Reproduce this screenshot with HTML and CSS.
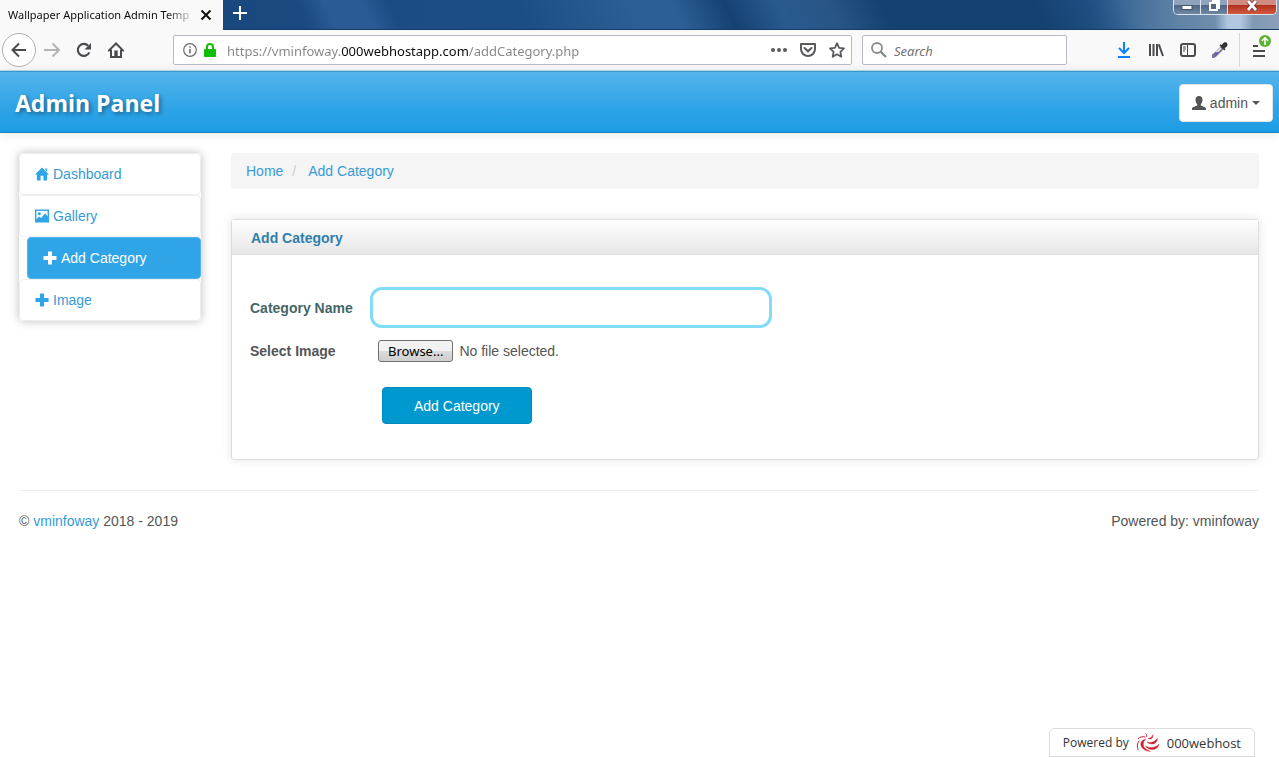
FILE: index.html
```
<!DOCTYPE html>
<html lang="en">
<head>
  <meta charset="UTF-8">
  <meta name="viewport" content="width=device-width, initial-scale=1.0">
  <title>Wallpaper Application Admin Template</title>
  <link rel="stylesheet" href="styles.css">
</head>
<body>

  <div class="browser">
    <div class="titlebar">
      <div class="tab">
        <span class="tab-title">Wallpaper Application Admin Temp</span>
        <button class="tab-close" aria-label="Close tab">
          <svg width="12" height="12" viewBox="0 0 12 12"><path d="M1.5 1.5l9 9M10.5 1.5l-9 9" stroke="#111" stroke-width="2" fill="none"/></svg>
        </button>
      </div>
      <button class="tab-new" aria-label="New tab">
        <svg width="14" height="14" viewBox="0 0 14 14"><path d="M7 0v14M0 7h14" stroke="#fff" stroke-width="2" fill="none"/></svg>
      </button>
      <div class="window-buttons">
        <button class="win-min" aria-label="Minimize">
          <svg width="12" height="12" viewBox="0 0 12 12"><rect x="1" y="5.5" width="10" height="4" fill="#fff" stroke="#4a5569"/></svg>
        </button>
        <button class="win-max" aria-label="Restore">
          <svg width="12" height="12" viewBox="0 0 12 12"><path d="M4 1h7v7h-2" fill="none" stroke="#fff" stroke-width="2"/><rect x="2" y="3" width="7" height="7" fill="#566780" stroke="#fff" stroke-width="2"/></svg>
        </button>
        <button class="win-close" aria-label="Close">
          <svg width="12" height="12" viewBox="0 0 12 12"><path d="M2 1l8 9M10 1l-8 9" stroke="#5b3a40" stroke-width="4.4"/><path d="M2 1l8 9M10 1l-8 9" stroke="#fff" stroke-width="2.8"/></svg>
        </button>
      </div>
    </div>

    <div class="toolbar">
      <button class="nav-back" aria-label="Back">
        <svg width="16" height="16" viewBox="0 0 16 16"><path d="M15 8H2M8 1.5L1.5 8L8 14.5" fill="none" stroke="#4a4a4f" stroke-width="2"/></svg>
      </button>
      <button class="nav-icon" aria-label="Forward">
        <svg width="16" height="16" viewBox="0 0 16 16"><path d="M0 8h14M8.500 1.500L15 8l-6.500 6.500" fill="none" stroke="#b4b4b7" stroke-width="2"/></svg>
      </button>
      <button class="nav-icon" aria-label="Reload">
        <svg width="16" height="16" viewBox="0 0 16 16"><path d="M13.300 10.400A6 6 0 1 1 12.200 3.800" fill="none" stroke="#4a4a4f" stroke-width="2.200"/><path d="M15 1v6.500H8.500z" fill="#4a4a4f"/></svg>
      </button>
      <button class="nav-icon" aria-label="Home">
        <svg width="16" height="16" viewBox="0 0 16 16"><path d="M.8 8.600L8 1.500l7.200 7.100" fill="none" stroke="#4a4a4f" stroke-width="2" stroke-linecap="round"/><path d="M3 7.500V15h10V7.500" fill="none" stroke="#4a4a4f" stroke-width="2"/><path d="M6.300 8.500h3.400V15H6.300z" fill="#4a4a4f"/></svg>
      </button>

      <div class="urlbar">
        <svg width="14" height="14" viewBox="0 0 14 14"><circle cx="7" cy="7" r="6.300" fill="none" stroke="#6a6a6e" stroke-width="1.200"/><path d="M7 6v4.500M7 3.300v1.500" stroke="#6a6a6e" stroke-width="1.500"/></svg>
        <svg width="12" height="14" viewBox="0 0 12 14"><path d="M3 6.500V4a3 3 0 0 1 6 0v2.500" fill="none" stroke="#12bc00" stroke-width="2"/><rect y="6" width="12" height="8" rx="1" fill="#12bc00"/></svg>
        <input class="url" type="text" aria-label="Address" value="https://vminfoway.000webhostapp.com/addCategory.php">
        <button class="nav-icon" aria-label="Page actions">
          <svg width="16" height="16" viewBox="0 0 16 16"><g fill="#5a5a5e"><circle cx="2" cy="8" r="2"/><circle cx="8" cy="8" r="2"/><circle cx="14" cy="8" r="2"/></g></svg>
        </button>
        <button class="nav-icon" aria-label="Save to Pocket">
          <svg width="16" height="16" viewBox="0 0 16 16"><path d="M1 2h14v5a7 7 0 0 1-14 0z" fill="none" stroke="#5a5a5e" stroke-width="2" stroke-linejoin="round"/><path d="M4.500 6L8 9.300L11.500 6" fill="none" stroke="#5a5a5e" stroke-width="2" stroke-linecap="round"/></svg>
        </button>
        <button class="nav-icon" aria-label="Bookmark">
          <svg width="16" height="16" viewBox="0 0 16 16"><path d="M8 1.200l2.100 4.600 4.900.6-3.600 3.400.9 4.900L8 12.300l-4.300 2.400.9-4.900L1 6.400l4.900-.6z" fill="none" stroke="#5a5a5e" stroke-width="1.800" stroke-linejoin="round"/></svg>
        </button>
      </div>

      <div class="searchbar">
        <svg width="16" height="16" viewBox="0 0 16 16"><circle cx="6" cy="6" r="5" fill="none" stroke="#8a8a8d" stroke-width="1.800"/><path d="M9.500 9.500L15 15" stroke="#8a8a8d" stroke-width="2.400"/></svg>
        <input class="search" type="text" aria-label="Search" placeholder="Search">
      </div>

      <div class="tools">
        <button class="nav-icon" aria-label="Downloads">
          <svg width="16" height="16" viewBox="0 0 16 16"><path d="M8 0v11M3 6l5 5 5-5M2 15h12" fill="none" stroke="#0a84ff" stroke-width="2"/></svg>
        </button>
        <button class="nav-icon" aria-label="Library">
          <svg width="16" height="16" viewBox="0 0 16 16"><path d="M2 2v12M5.500 2v12M9 2v12M10.800 2.300L15 14" fill="none" stroke="#4a4a4f" stroke-width="2"/></svg>
        </button>
        <button class="nav-icon" aria-label="Sidebars">
          <svg width="16" height="16" viewBox="0 0 16 16"><rect x="1" y="2" width="14" height="12" rx="2" fill="none" stroke="#4a4a4f" stroke-width="2"/><path d="M7.500 2v12" stroke="#4a4a4f"/><path d="M3 5h3M3 7h3M3 9h2" stroke="#4a4a4f"/></svg>
        </button>
        <button class="nav-icon" aria-label="Eyedropper">
          <svg width="16" height="16" viewBox="0 0 16 16"><path d="M9.500 6.500L3 13l-1.500 1" fill="none" stroke="#77748f" stroke-width="4" stroke-linecap="round"/><path d="M9 6L4.500 10.500" stroke="#dedee8" stroke-width="2"/><path d="M6 10.500L3 13.300" stroke="#655fc6" stroke-width="2"/><path d="M7.500 3.500l5 5 1-1.500-1-1c2-.8 3.500-2.200 2.800-4.200C14.500-.2 12-.2 10.500 2L9.500 3l-1-.7z" fill="#333"/></svg>
        </button>
        <span class="tools-line"></span>
        <button class="menu" aria-label="Menu, update available">
          <svg width="24" height="32" viewBox="0 0 24 32"><path d="M6 12h5M6 17h12M6 22h12" stroke="#4a4a4f" stroke-width="2"/><circle cx="18" cy="7" r="6" fill="#5bb431"/><path d="M18 11V4.500M14.800 7L18 3.800 21.200 7" fill="none" stroke="#fff" stroke-width="1.600"/></svg>
        </button>
      </div>
    </div>
  </div>

  <header class="navbar">
    <a class="brand" href="#">Admin Panel</a>
    <button class="user-btn">
      <svg width="14" height="14" viewBox="0 0 14 14"><path d="M7 0C9.300 0 10.600 1.500 10.500 4c-.1 2-.8 3.300-1.700 4.200v1.300c1.500.8 5 1.400 5.200 3V14H0v-1.500c.2-1.600 3.700-2.200 5.200-3V8.200C4.300 7.300 3.600 6 3.500 4 3.400 1.500 4.700 0 7 0z" fill="#555"/></svg>
      admin
      <span class="caret"></span>
    </button>
  </header>

  <div class="container">
    <div class="row">
      <nav class="sidebar">
        <a href="#">
          <svg width="14" height="14" viewBox="0 0 15 14"><path d="M7.500 0L15 7.500h-2V14H9V9H6v5H2V7.500H0zM11 1h2v3.500l-2-2z" fill="#2fa4e7"/></svg>
          Dashboard
        </a>
        <a href="#">
          <svg width="14" height="14" viewBox="0 0 14 14"><rect x=".7" y="1.200" width="12.600" height="11.600" fill="none" stroke="#2fa4e7" stroke-width="1.400"/><circle cx="4.300" cy="4.800" r="1.500" fill="#2fa4e7"/><path d="M1 10.500l3-3 2 1.500 4-4.500 3 3V13H1z" fill="#2fa4e7"/></svg>
          Gallery
        </a>
        <a class="active" href="#">
          <svg width="14" height="14" viewBox="0 0 14 14"><path d="M5 .5h4V5h4.500v4H9v4.500H5V9H.5V5H5z" fill="#fff"/></svg>
          Add Category
        </a>
        <a href="#">
          <svg width="14" height="14" viewBox="0 0 14 14"><path d="M5 .5h4V5h4.500v4H9v4.500H5V9H.5V5H5z" fill="#2fa4e7"/></svg>
          Image
        </a>
      </nav>

      <main class="content">
        <ul class="breadcrumb">
          <li><a href="#">Home</a></li>
          <li><a href="#">Add Category</a></li>
        </ul>

        <section class="box">
          <div class="box-header">
            <h2>Add Category</h2>
          </div>
          <form class="box-content">
            <div class="form-row">
              <label class="name-label" for="category">Category Name</label>
              <input class="category" type="text" id="category">
            </div>
            <div class="form-row">
              <span class="row-label" id="image-label">Select Image</span>
              <label class="file">
                <input type="file" aria-labelledby="image-label">
                <span class="file-btn">Browse...</span>
                No file selected.
              </label>
            </div>
            <button class="submit" type="button">Add Category</button>
          </form>
        </section>
      </main>
    </div>

    <footer class="footer">
      <p>© <a href="#">vminfoway</a> 2018 - 2019</p>
      <p>Powered by: vminfoway</p>
    </footer>
  </div>

  <a class="host-badge" href="#">
    Powered by
    <svg width="24" height="20" viewBox="0 0 24 20">
      <g fill="#d0202e" stroke="#d0202e" stroke-width=".4">
        <path d="M10 6C5 7 3.500 11 6 14.500c1.800 2.500 5 4 8.500 3.800C10 17 7.500 14.500 7.300 11.500 7.200 9 8.300 7.200 10 6z"/>
        <path d="M9.500 13c3.500 2.500 9.500 2 13.500-1.800-.8 3.300-3.500 5.300-7 5.300-3 0-5.500-1.500-6.500-3.500z"/>
        <path d="M11 9c3.500 1.200 7.500.2 10.500-3.500-.2 3.500-2.500 5.500-5.500 5.500-2.200 0-4-.8-5-2z"/>
        <path d="M12 5.500c2.200 0 4-1.200 4.800-3.800.8 2.800-1.800 5.600-4.800 3.800z"/>
      </g>
      <g fill="none" stroke="#d0202e" stroke-linecap="round">
        <path d="M3 8C1 10.500.8 13.500 2 16.500"/>
        <path d="M9 4C6.500 3.200 4 3.800 2 5.800M10.800 3.500C11 2.200 10.600 1.400 9.800.8"/>
      </g>
    </svg>
    <span class="host-name">000webhost</span>
  </a>

</body>
</html>
```
FILE: styles.css
```
* {
  box-sizing: border-box;
  margin: 0;
  padding: 0;
}

body {
  min-height: 100vh;
  background-color: #fff;
  color: #555;
  font-family: "Liberation Sans", Arial, sans-serif;
  font-size: 14px;
  line-height: 20px;
}

a {
  color: #369bd7;
  text-decoration: none;
}

button {
  border: none;
  background: none;
  font: inherit;
  cursor: pointer;
}

svg {
  display: block;
  flex-shrink: 0;
}

/* browser window */
.browser {
  font-family: "Noto Sans", sans-serif;
}

.titlebar {
  display: flex;
  height: 30px;
  background:
    linear-gradient(90deg, transparent 95%, rgba(190, 211, 235, 0.8) 96%, rgba(190, 211, 235, 0.8) 97%, transparent 98%),
    linear-gradient(65deg, transparent 24%, #2b5b94 26%, #2b5b94 29%, transparent 31%, transparent 41%, #2b5f96 50%, #2b5f96 53%, #164174 57%, #285a90 61%, #285585 65%, #154171 69%, #154171 81%, transparent 88%),
    linear-gradient(90deg, #174379, #1c4e86 40%, #24588e 85%, #5f82a6 92%, #8ba0b8);
  border-bottom: 1px solid #173a66;
}

.tab {
  display: flex;
  align-items: center;
  gap: 4px;
  width: 223px;
  height: 30px;
  padding: 0 11px 0 8px;
  background-color: #f9f9fa;
}

.tab-title {
  flex: 1;
  white-space: nowrap;
  font-size: 11px;
  color: #0c0c0d;
  mask-image: linear-gradient(90deg, #000 84%, transparent);
}

.tab-new {
  align-self: flex-start;
  padding: 6px 10px;
}

.window-buttons {
  display: flex;
  align-self: flex-start;
  height: 15px;
  margin-left: auto;
  margin-right: 2px;
  border: 1px solid #dbe4ef;
  border-top: none;
  border-radius: 0 0 5px 5px;
  overflow: hidden;
}

.window-buttons button {
  display: flex;
  justify-content: center;
  width: 27px;
  border-right: 1px solid #dbe4ef;
  background: linear-gradient(#8fa3bd 35%, #4c6485 36%, #7188a5);
}

.window-buttons .win-close {
  width: 48px;
  border: none;
  background: linear-gradient(#d08c80 35%, #b32d1c 36%, #d15a40);
}

.toolbar {
  display: flex;
  align-items: center;
  height: 41px;
  padding: 0 8px 0 2px;
  background-color: #f9f9fa;
  border-bottom: 1px solid #b5e3f5;
}

.nav-icon {
  padding: 8px;
}

.nav-back {
  padding: 8px;
  border: 1px solid #b1b1b3;
  border-radius: 50%;
  background-color: #fff;
}

.urlbar,
.searchbar {
  display: flex;
  align-items: center;
  height: 30px;
  border: 1px solid #b9bac3;
  border-radius: 2px;
  background-color: #fff;
}

.urlbar {
  flex: 1;
  gap: 7px;
  margin-left: 41px;
  padding-left: 9px;
}

.urlbar .nav-icon {
  padding: 6px 6px 6px 0;
}

.url,
.search {
  flex: 1;
  min-width: 0;
  padding-top: 2px;
  border: none;
  outline: none;
  background: none;
  font-family: "Noto Sans", sans-serif;
  font-size: 13px;
}

/* host part of the address is darker than the rest */
.url {
  margin-left: 4px;
  background: linear-gradient(90deg, #858588 114px, #0c0c0d 114px, #0c0c0d 241px, #858588 241px);
  -webkit-background-clip: text;
  background-clip: text;
  -webkit-text-fill-color: transparent;
}

.searchbar {
  gap: 7px;
  width: 205px;
  margin-left: 10px;
  padding-left: 8px;
}

.search::placeholder {
  color: #737373;
  font-style: italic;
}

.tools {
  display: flex;
  align-items: center;
  margin-left: 41px;
}

.tools-line {
  width: 1px;
  height: 34px;
  margin: 0 7px 0 3px;
  background-color: #d7d7db;
}

/* page */
.navbar {
  display: flex;
  align-items: center;
  justify-content: space-between;
  height: 62px;
  padding: 2px 6px 0 15px;
  background: linear-gradient(#54b4eb, #2fa4e7 60%, #1d9ce5);
  border-top: 1px solid #3f95cb;
  border-bottom: 1px solid #1b82c2;
  box-shadow: 0 1px 10px rgba(0, 0, 0, 0.1);
}

.brand {
  color: #fff;
  font-family: "Open Sans", sans-serif;
  font-size: 23px;
  font-weight: bold;
  text-shadow: 2px 2px 4px rgba(0, 0, 0, 0.4);
}

.user-btn {
  display: flex;
  align-items: center;
  gap: 4px;
  padding: 8px 12px;
  border: 1px solid #e3e3e3;
  border-radius: 4px;
  background-color: #fff;
  color: #555;
}

.caret {
  border-top: 4px solid #555;
  border-left: 4px solid transparent;
  border-right: 4px solid transparent;
}

.container {
  padding: 20px 20px 0 19px;
}

.row {
  display: flex;
  align-items: flex-start;
  gap: 30px;
}

.sidebar {
  display: flex;
  flex-direction: column;
  width: 182px;
  border-radius: 4px;
  box-shadow: 0 0 10px #bdbdbd;
  background-color: #fff;
}

.sidebar a {
  display: flex;
  align-items: center;
  gap: 4px;
  height: 42px;
  padding: 0 15px;
  border: 1px solid #eee;
  border-radius: 4px;
}

.sidebar .active {
  margin-left: 8px;
  border-color: #54b4eb;
  background-color: #2fa4e7;
  color: #fff;
}

.content {
  flex: 1;
}

.breadcrumb {
  display: flex;
  padding: 8px 15px;
  border-radius: 4px;
  background-color: #f5f5f5;
  list-style: none;
}

.breadcrumb li + li::before {
  content: "/";
  padding: 0 12px 0 9px;
  color: #ccc;
}

.box {
  margin-top: 30px;
  border: 1px solid #dedede;
  border-radius: 3px;
  box-shadow: 0 0 10px rgba(189, 189, 189, 0.4);
}

.box-header {
  padding: 8px 19px 6px;
  border-bottom: 1px solid #dedede;
  background: linear-gradient(#fff, #e6e6e6);
}

.box-header h2 {
  color: #317eac;
  font-size: 14px;
  line-height: 20px;
}

.box-content {
  padding: 32px 18px 35px;
}

.form-row {
  display: flex;
  align-items: center;
}

.form-row + .form-row {
  margin-top: 12px;
}

.name-label,
.row-label {
  width: 120px;
  font-weight: bold;
}

.name-label {
  color: #466;
}

.row-label {
  width: 128px;
}

.category {
  width: 402px;
  height: 41px;
  padding: 0 12px;
  border: 3px solid #82dcf5;
  border-radius: 12px;
  outline: none;
  font: inherit;
}

.file {
  display: flex;
  align-items: center;
  gap: 6px;
}

.file input {
  position: absolute;
  width: 1px;
  height: 1px;
  opacity: 0;
}

.file-btn {
  padding: 0 9px;
  border: 1px solid #707070;
  border-radius: 3px;
  background: linear-gradient(#f2f2f2 50%, #dcdcdc 50%, #cfcfcf);
  color: #000;
  font-family: "Noto Sans", sans-serif;
  font-size: 13px;
}

.submit {
  margin: 25px 0 0 132px;
  padding: 8px 31px 7px;
  border: 1px solid #0088c0;
  border-radius: 4px;
  background-color: #0099cf;
  color: #fff;
}

.footer {
  display: flex;
  justify-content: space-between;
  margin-top: 30px;
  padding-top: 20px;
  border-top: 1px solid #eee;
}

.host-badge {
  position: fixed;
  right: 24px;
  bottom: 0;
  display: flex;
  align-items: center;
  gap: 7px;
  height: 29px;
  padding: 0 13px;
  border: 1px solid #ddd;
  border-radius: 5px 5px 0 0;
  background-color: #fff;
  color: #333;
  font-family: "Open Sans", sans-serif;
  font-size: 12px;
}

.host-name {
  font-size: 13px;
}
```
